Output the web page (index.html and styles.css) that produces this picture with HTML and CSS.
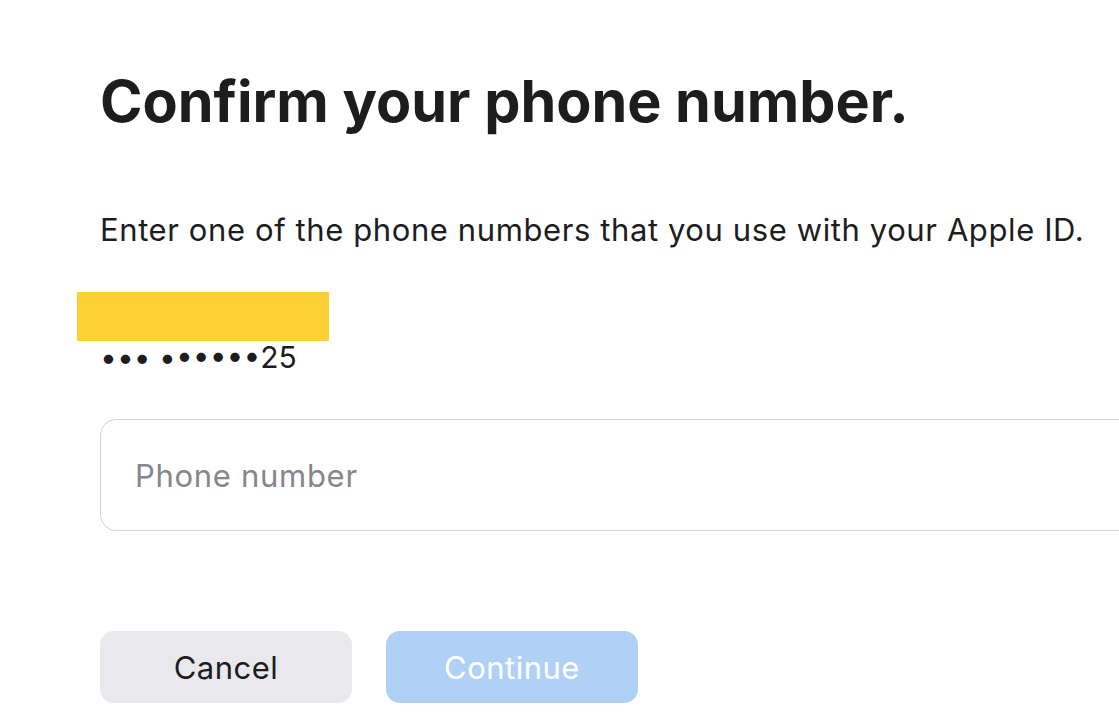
FILE: index.html
```html
<!DOCTYPE html>
<html>
<head>
<meta charset="utf-8">
<link rel="stylesheet" href="styles.css">
</head>
<body>
<main class="page">
  <h1 class="title">Confirm your phone number.</h1>
  <p class="lead">Enter one of the phone numbers that you use with your Apple ID.</p>
  <div class="masked">
    <div class="redact"></div>
    <div class="number">••• ••••••25</div>
  </div>
  <div class="field"><span class="placeholder">Phone number</span></div>
  <div class="actions">
    <button class="btn btn-cancel">Cancel</button>
    <button class="btn btn-continue">Continue</button>
  </div>
</main>
</body>
</html>
```
FILE: styles.css
```css
html, body {
  margin: 0;
  padding: 0;
  background: #fff;
  overflow: hidden;
}
body {
  font-family: "Inter", "Liberation Sans", sans-serif;
  color: #1d1d1f;
}
.page {
  padding: 66px 0 0 100px;
  width: 1119px;
  box-sizing: border-box;
}
.title {
  margin: 0;
  font-size: 57.5px;
  font-weight: 700;
  letter-spacing: 0;
  line-height: 70px;
}
.lead {
  margin: 74px 0 0 0;
  font-size: 31px;
  letter-spacing: 0.6px;
  line-height: 40px;
}
.masked {
  margin-top: 42px;
}
.redact {
  margin-left: -23px;
  width: 252px;
  height: 49px;
  background: #fdd133;
}
.number {
  font-size: 30px;
  line-height: 34px;
  margin-top: -1px;
}
.field {
  margin-top: 45px;
  height: 112px;
  width: 1040px;
  border: 1.5px solid #d2d2d7;
  border-radius: 16px;
  box-sizing: border-box;
  display: flex;
  align-items: center;
  padding-left: 34px;
}
.placeholder {
  font-size: 31px;
  letter-spacing: 0.7px;
  color: #86868b;
}
.actions {
  margin-top: 100px;
  display: flex;
  gap: 34px;
}
.btn {
  width: 252px;
  height: 72px;
  border: none;
  border-radius: 14px;
  font-family: inherit;
  font-size: 31px;
  letter-spacing: 0.5px;
  padding: 0;
}
.btn-cancel {
  background: #e8e8ed;
  color: #1d1d1f;
}
.btn-continue {
  background: #afd1f5;
  color: #fff;
}
```
